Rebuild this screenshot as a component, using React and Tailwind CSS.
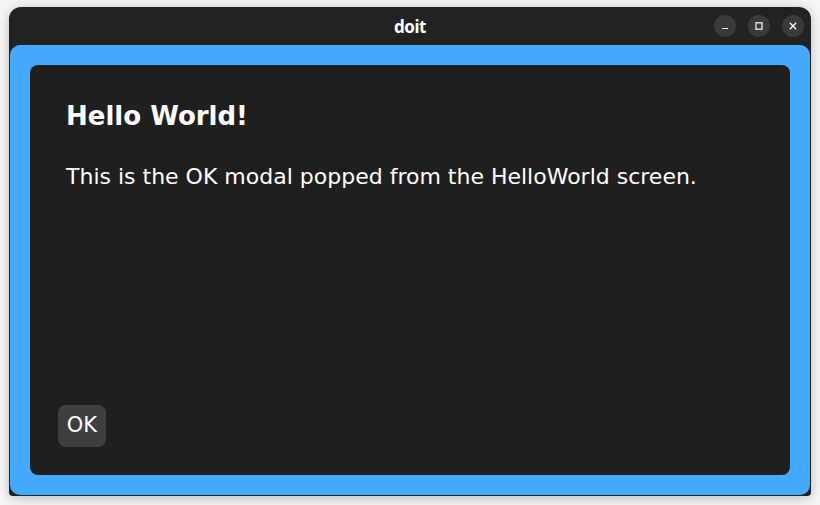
import React from "react";

export default function App() {
  return (
    <div className="w-[820px] h-[505px] bg-[#f6f6f6] pt-[7px] pl-[9px] overflow-hidden" style={{ fontFamily: '"DejaVu Sans", sans-serif' }}>
      <div className="w-[802px] h-[489px] rounded-t-[12px] rounded-b-[4px] bg-[#222222] flex flex-col shadow-[0_2px_12px_rgba(0,0,0,0.25)] overflow-hidden">
        <div className="h-[38px] flex items-center relative shrink-0">
          <div className="flex-1 text-center text-white font-bold text-[17px] tracking-tight pt-[2px]" style={{ fontFamily: '"Noto Sans", sans-serif' }}>doit</div>
          <div className="absolute right-[7px] top-[8px] flex gap-[12px]">
            <div className="w-[22px] h-[22px] rounded-full bg-[#3a3a3a] flex items-center justify-center">
              <svg width="10" height="10" viewBox="0 0 10 10"><path d="M2 7.5h6" stroke="white" strokeWidth="1.2" /></svg>
            </div>
            <div className="w-[22px] h-[22px] rounded-full bg-[#3a3a3a] flex items-center justify-center">
              <svg width="10" height="10" viewBox="0 0 10 10"><rect x="2" y="1.8" width="6" height="6.4" fill="none" stroke="white" strokeWidth="1.2" /></svg>
            </div>
            <div className="w-[22px] h-[22px] rounded-full bg-[#3a3a3a] flex items-center justify-center">
              <svg width="10" height="10" viewBox="0 0 10 10"><path d="M1.8 1.8l6.4 6.4M8.2 1.8l-6.4 6.4" stroke="white" strokeWidth="1.3" /></svg>
            </div>
          </div>
        </div>
        <div className="mx-[1px] mb-[1px] flex-1 bg-[#45aaff] rounded-t-[10px] rounded-b-[10px] p-[20px] flex">
          <div className="flex-1 bg-[#1f1f1f] rounded-[8px] pt-[36px] pl-[36px] pr-[20px] pb-[28px] flex flex-col">
            <div className="text-white font-bold text-[26px] leading-[30px]">Hello World!</div>
            <div className="text-white text-[22px] leading-[28px] mt-[32px]">This is the OK modal popped from the HelloWorld screen.</div>
            <div className="flex-1" />
            <div className="-ml-[8px] w-[48px] h-[42px] rounded-[8px] bg-[#3f3f3f] flex items-center justify-center text-white text-[21px]">OK</div>
          </div>
        </div>
      </div>
    </div>
  );
}
